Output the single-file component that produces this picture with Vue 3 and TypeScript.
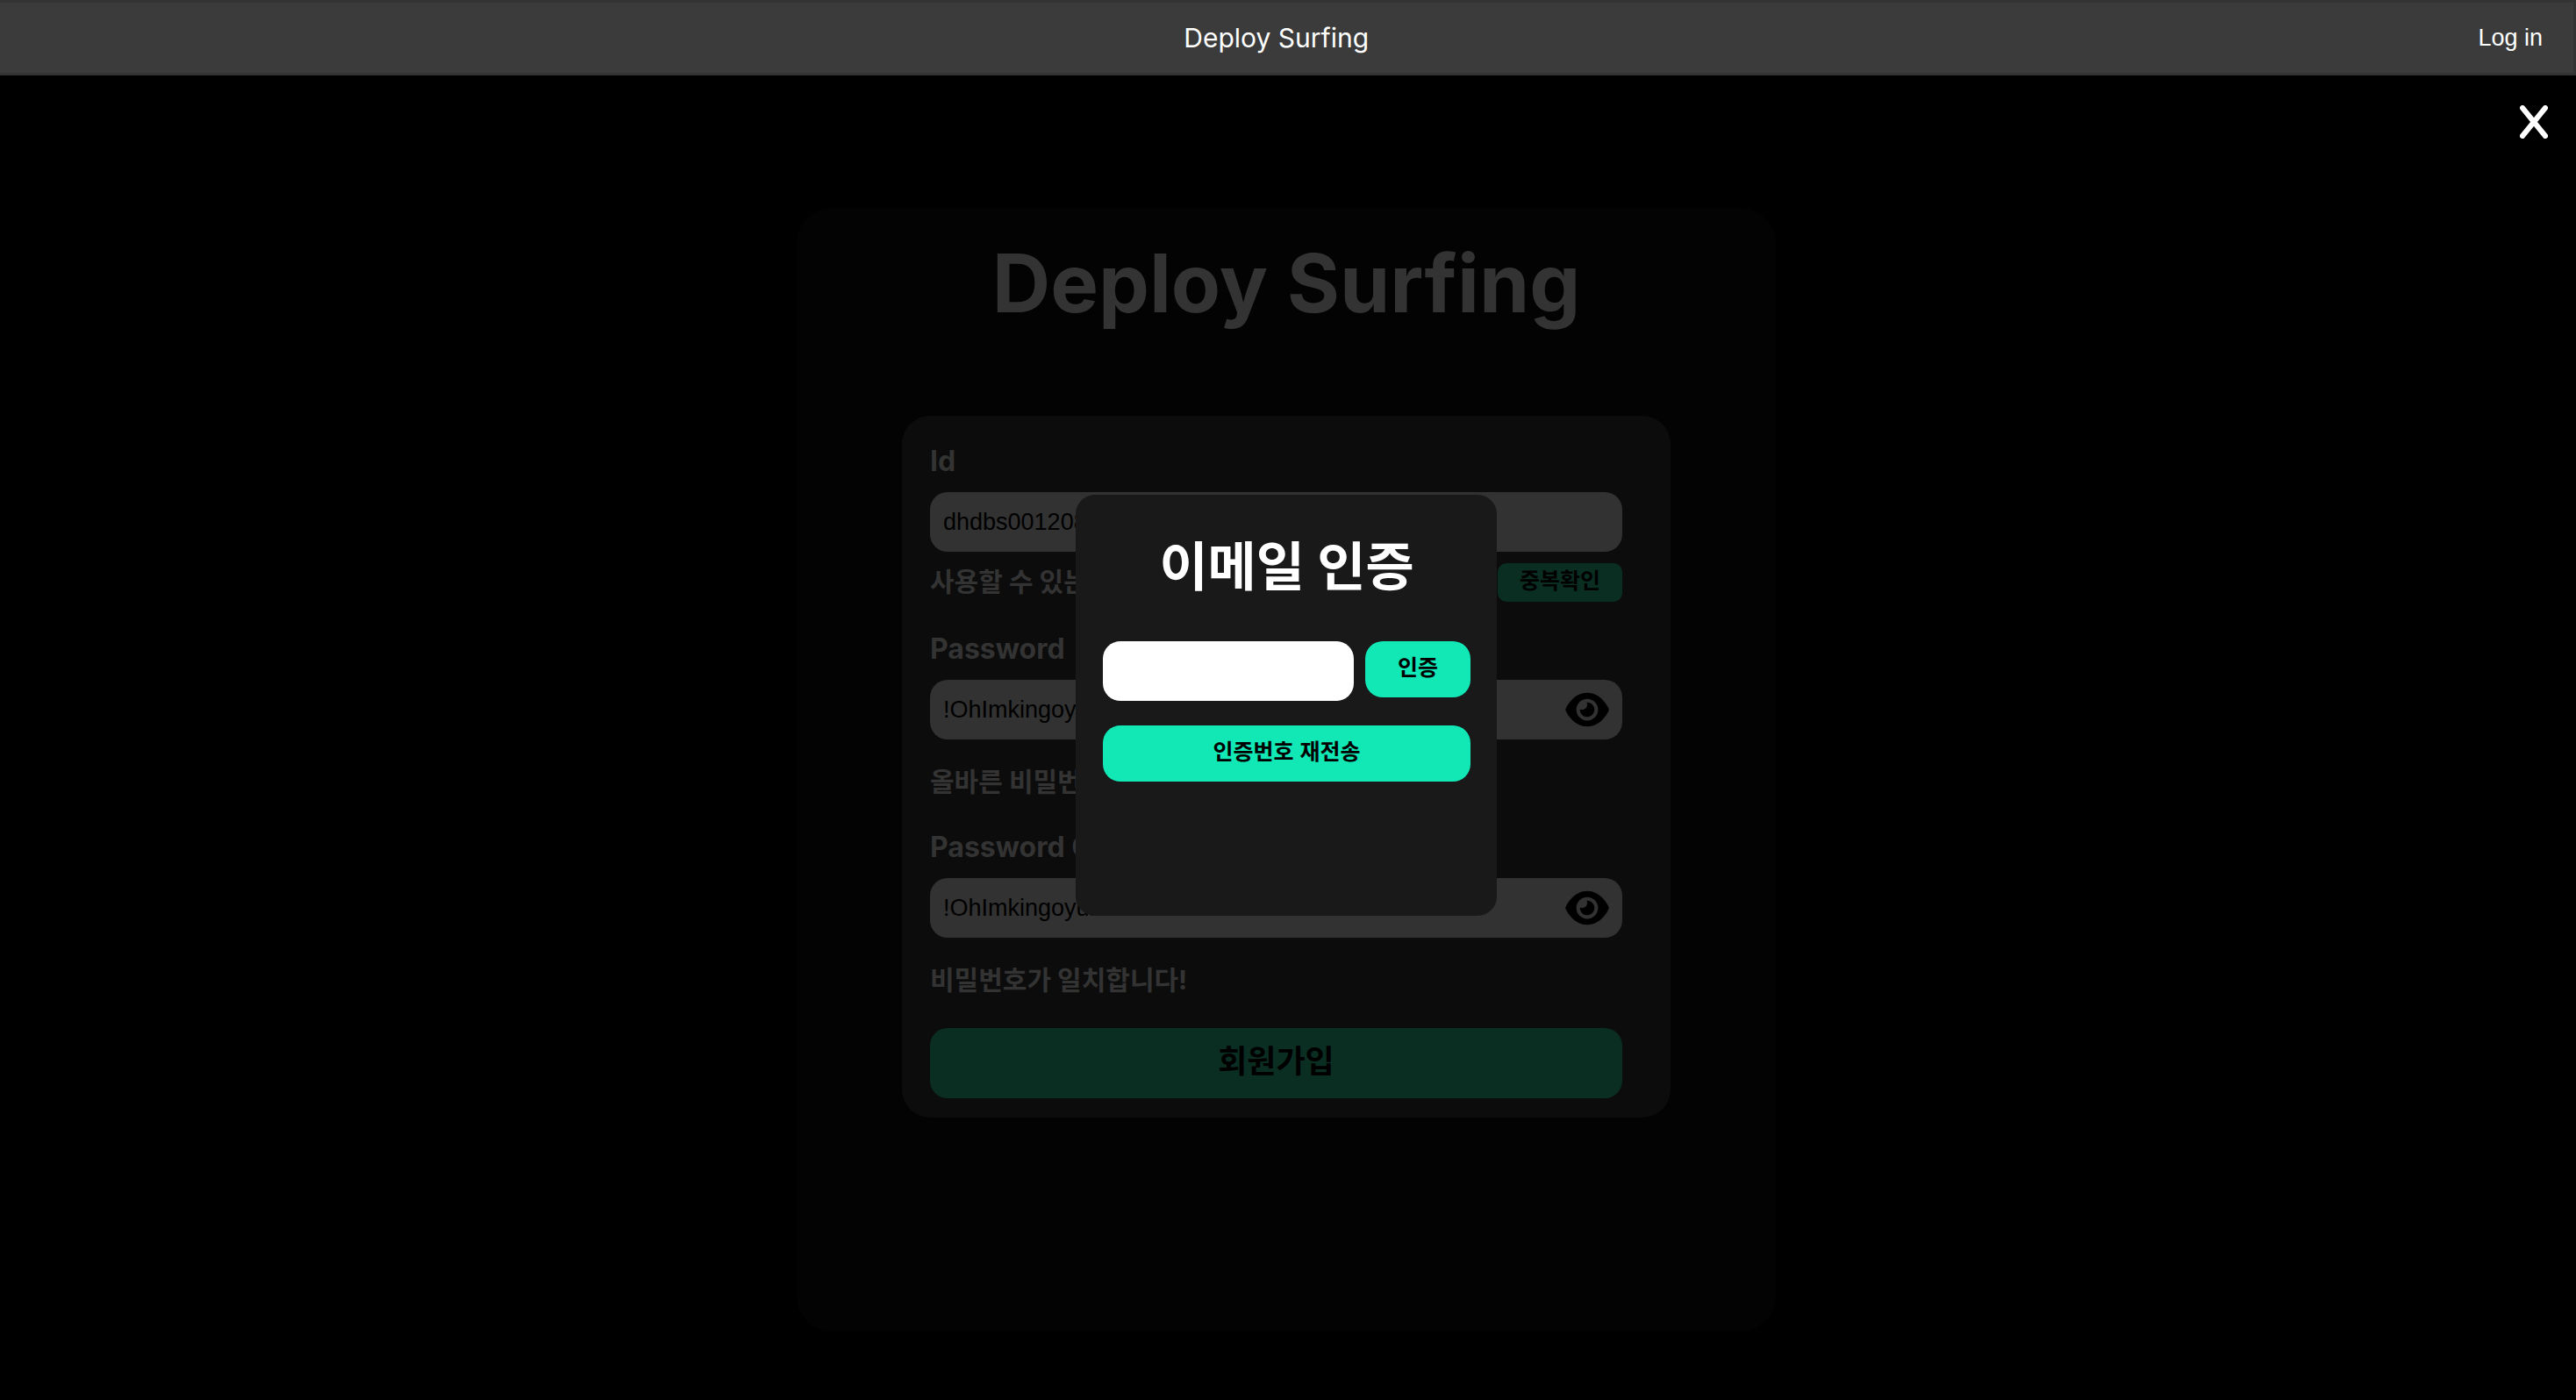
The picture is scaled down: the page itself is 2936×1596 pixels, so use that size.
<script setup lang="ts">
import { ref } from 'vue'

const userId = ref('dhdbs001208')
const password = ref('!OhImkingoyun')
const passwordConfirm = ref('!OhImkingoyun')
const code = ref('')

const eyePath =
  'M288 32c-80.8 0-145.5 36.8-192.6 80.6C48.6 156 17.3 208 2.5 243.7c-3.3 7.9-3.3 16.7 0 24.6C17.3 304 48.6 356 95.4 399.4C142.5 443.2 207.2 480 288 480s145.5-36.8 192.6-80.6c46.8-43.5 78.1-95.4 93-131.1c3.3-7.9 3.3-16.7 0-24.6c-14.9-35.7-46.2-87.7-93-131.1C433.5 68.8 368.8 32 288 32zM144 256a144 144 0 1 1 288 0 144 144 0 1 1 -288 0zm144-64c0 35.3-28.7 64-64 64c-7.1 0-13.9-1.2-20.3-3.3c-5.5-1.8-11.9 1.6-11.7 7.4c.3 6.9 1.3 13.8 3.2 20.7c13.7 51.2 66.4 81.6 117.6 67.9s81.6-66.4 67.9-117.6c-11.1-41.5-47.8-69.4-88.6-71.1c-5.8-.2-9.2 6.1-7.4 11.7c2.1 6.4 3.3 13.2 3.3 20.3z'
</script>

<template>
  <div class="page">
    <header class="bar">
      <a class="brand" href="#">Deploy Surfing</a>
      <button class="login" type="button">Log in</button>
    </header>

    <main class="stage">
      <section class="panel">
        <h1 class="title">Deploy Surfing</h1>
        <form class="card" @submit.prevent>
          <label for="user-id">Id</label>
          <div class="field">
            <input id="user-id" v-model="userId" type="text" />
          </div>
          <div class="status status-id">
            <span>사용할 수 있는 ID</span>
            <button class="check" type="button">중복확인</button>
          </div>

          <label for="pw">Password</label>
          <div class="field">
            <input id="pw" v-model="password" type="text" />
            <button class="eye" type="button" aria-label="Password">
              <svg viewBox="0 0 576 512"><path :d="eyePath" /></svg>
            </button>
          </div>
          <div class="status">올바른 비밀번호입니다!</div>

          <label for="pw-confirm">Password Confirm</label>
          <div class="field">
            <input id="pw-confirm" v-model="passwordConfirm" type="text" />
            <button class="eye" type="button" aria-label="Password Confirm">
              <svg viewBox="0 0 576 512"><path :d="eyePath" /></svg>
            </button>
          </div>
          <div class="status">비밀번호가 일치합니다!</div>

          <button class="submit" type="submit">회원가입</button>
        </form>
      </section>

      <div class="overlay">
        <button class="close" type="button" aria-label="Close">
          <svg viewBox="0 0 32 38"><path d="M3 3 29 35M29 3 3 35" /></svg>
        </button>
        <div class="modal" role="dialog" aria-labelledby="modal-title">
          <h2 id="modal-title">이메일 인증</h2>
          <div class="verify">
            <input v-model="code" type="text" aria-labelledby="modal-title" />
            <button class="action" type="button">인증</button>
          </div>
          <button class="action resend" type="button">인증번호 재전송</button>
        </div>
      </div>
    </main>
  </div>
</template>

<style>
body {
  margin: 0;
  background: #000;
}
</style>

<style scoped>
.page {
  display: flex;
  flex-direction: column;
  min-height: 100vh;
  font-family: Inter, 'Noto Sans CJK KR', sans-serif;
}

.page * {
  box-sizing: border-box;
}

button,
input {
  border: 0;
  padding: 0;
  margin: 0;
  font-family: 'Liberation Sans', 'Noto Sans CJK KR', sans-serif;
}

button {
  cursor: pointer;
}

.bar {
  display: flex;
  align-items: center;
  justify-content: space-between;
  height: 86px;
  padding: 0 35px;
  background: #3b3b3b;
  border: 3px solid #333;
  border-left: 0;
}

.bar::before {
  content: '';
  width: 50px;
}

.brand {
  color: #fff;
  font-size: 30px;
  line-height: 40px;
  text-decoration: none;
}

.login {
  background: none;
  color: #fff;
  font-size: 27px;
  line-height: 32px;
}

.stage {
  position: relative;
  flex: 1;
  padding: 151px 4px 78px 0;
}

.panel {
  max-width: 1116px;
  margin: 0 auto;
  padding: 26px 120px 244px;
  border-radius: 40px;
  background: #030303;
}

.title {
  margin: 0 0 91px;
  color: #333;
  font-size: 92px;
  font-weight: 700;
  line-height: 120px;
  text-align: center;
  white-space: nowrap;
}

.card {
  display: flex;
  flex-direction: column;
  padding: 32px 55px 22px 32px;
  border-radius: 32px;
  background: #0c0c0c;
  color: #333;
  font-weight: 700;
}

.card label {
  margin-bottom: 15px;
  font-size: 32px;
  line-height: 40px;
}

.field {
  display: flex;
  align-items: center;
  height: 68px;
  padding: 0 15px;
  border-radius: 20px;
  background: #323232;
}

.field input {
  flex: 1;
  min-width: 0;
  background: none;
  color: #000;
  font-size: 27px;
  line-height: 32px;
}

.eye {
  width: 50px;
  height: 44px;
  background: none;
}

.eye svg {
  display: block;
  width: 50px;
  height: 44px;
}

.status {
  display: flex;
  justify-content: space-between;
  height: 44px;
  margin: 27px 0 32px;
  font-size: 30px;
  line-height: 42px;
}

.status-id {
  margin: 13px 0 34px;
}

.check {
  width: 142px;
  height: 44px;
  padding-bottom: 4px;
  border-radius: 10px;
  background: #0b2e23;
  color: #000;
  font-size: 25px;
  font-weight: 700;
  line-height: 40px;
}

.submit {
  height: 80px;
  padding-bottom: 2px;
  border-radius: 20px;
  background: #0b2e23;
  color: #000;
  font-size: 36px;
  font-weight: 700;
  line-height: 76px;
}

.overlay {
  position: absolute;
  inset: 0 4px 0 0;
  display: flex;
  justify-content: center;
  align-items: flex-start;
  padding-top: 478px;
}

.close {
  position: absolute;
  top: 34px;
  right: 28px;
  width: 32px;
  height: 38px;
  background: none;
}

.close svg {
  display: block;
  width: 32px;
  height: 38px;
  fill: none;
  stroke: #fff;
  stroke-width: 6;
  stroke-linecap: round;
}

.modal {
  display: flex;
  flex-direction: column;
  width: 480px;
  min-height: 480px;
  padding: 42px 30px 42px 31px;
  border-radius: 22px;
  background: #191919;
}

.modal h2 {
  margin: 0 0 45px;
  color: #fff;
  font-size: 60px;
  font-weight: 700;
  line-height: 80px;
  text-align: center;
}

.verify {
  display: flex;
  align-items: flex-start;
  gap: 13px;
  margin-bottom: 28px;
}

.verify input {
  flex: 1;
  min-width: 0;
  height: 68px;
  padding: 0 16px;
  border-radius: 20px;
  background: #fff;
  font-size: 27px;
}

.action {
  width: 120px;
  height: 64px;
  padding-bottom: 4px;
  border-radius: 20px;
  background: #12e7b6;
  color: #000;
  font-size: 25px;
  font-weight: 700;
  line-height: 60px;
}

.resend {
  width: 100%;
}
</style>
